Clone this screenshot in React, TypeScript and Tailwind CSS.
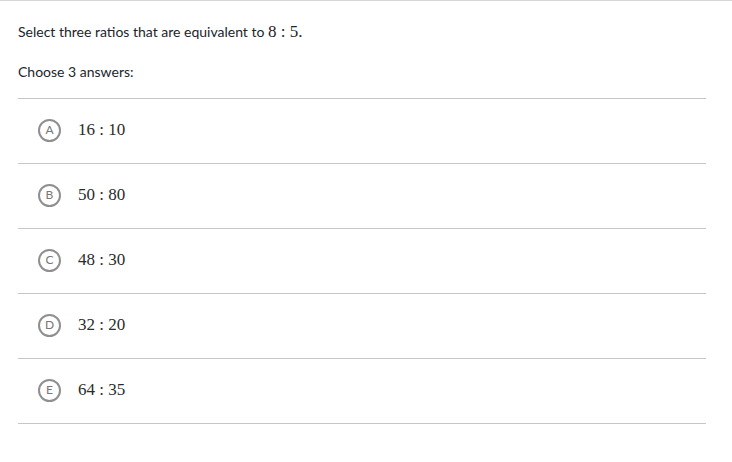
const choices = [
  { letter: "A", text: "16 : 10" },
  { letter: "B", text: "50 : 80" },
  { letter: "C", text: "48 : 30" },
  { letter: "D", text: "32 : 20" },
  { letter: "E", text: "64 : 35" },
];

export default function App() {
  return (
    <div className="w-[732px] h-[462px] bg-white border-t border-[#d6d6d6] font-['Lato',sans-serif] text-[#21242c]">
      <div className="pl-[18px] pt-[21px]">
        <p className="text-[14px] leading-[20px]">
          Select three ratios that are equivalent to{" "}
          <span className="font-['Liberation_Serif',serif] text-[17px]">8 : 5</span>
          <span className="font-['Liberation_Serif',serif] text-[17px]">.</span>
        </p>
        <p className="mt-[20px] text-[14px] leading-[20px]">Choose 3 answers:</p>

        <ul className="mt-[16px] w-[688px] border-t border-[#c6c6c6]">
          {choices.map((c) => (
            <li key={c.letter} className="h-[65px] pb-[2px] border-b border-[#c6c6c6] flex items-center">
              <span className="ml-[20px] w-[23px] h-[23px] rounded-full border-2 border-[#8f8f8f] flex items-center justify-center text-[12px] leading-none text-[#777]">
                {c.letter}
              </span>
              <span className="ml-[17px] font-['Liberation_Serif',serif] text-[17px] text-[#2b2b2b]">
                {c.text}
              </span>
            </li>
          ))}
        </ul>
      </div>
    </div>
  );
}
